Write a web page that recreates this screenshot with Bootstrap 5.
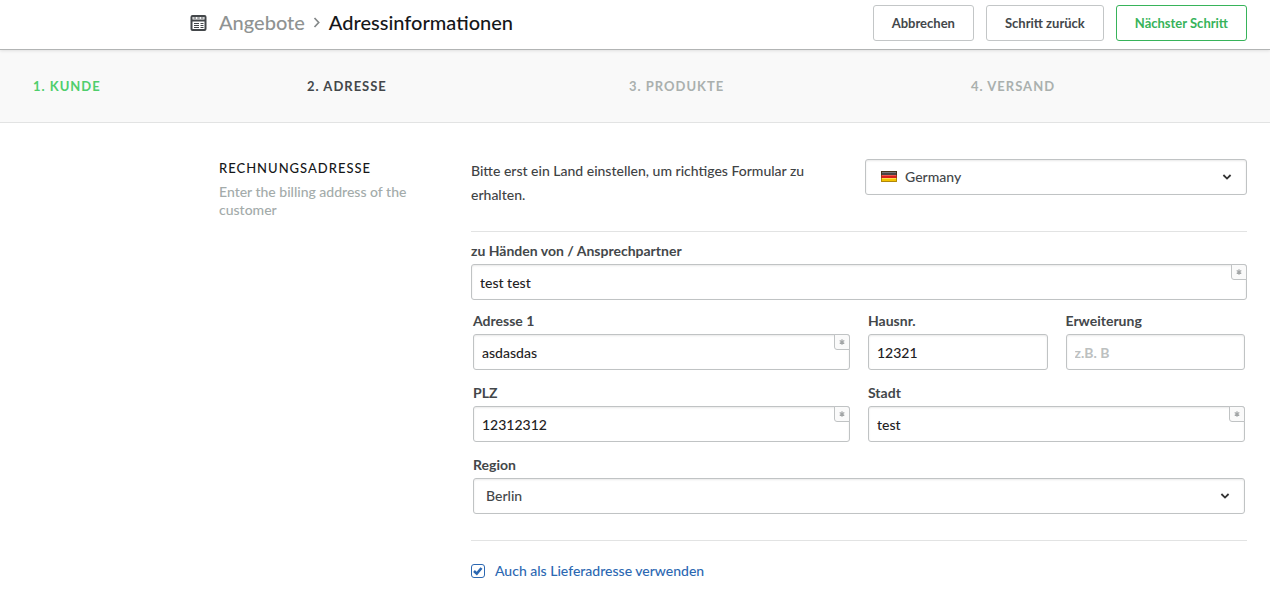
<!DOCTYPE html>
<html lang="de">
<head>
<meta charset="utf-8">
<meta name="viewport" content="width=device-width, initial-scale=1">
<title>Angebote – Adressinformationen</title>
<link href="https://cdn.jsdelivr.net/npm/bootstrap@5.3.0/dist/css/bootstrap.min.css" rel="stylesheet">
<style>
  body { font-family: Lato, "Liberation Sans", sans-serif; font-size: 14px; line-height: 24px; font-weight: 500; color: #3f4345; background: #fff; }
  .topbar { min-height: 50px; padding: 4px 23px 8px 190px; border-bottom: 1px solid #b2b4b4; box-shadow: 0 1px 3px rgba(0,0,0,.1); position: relative; }
  .crumbs { font-size: 20px; line-height: 28px; padding-bottom: 2px; }
  .crumbs a { color: #8f9392; text-decoration: none; }
  .crumbs .current-page { color: #151719; }
  .action-btn { --bs-btn-font-size: 13px; --bs-btn-line-height: 20px; --bs-btn-padding-y: 7px; --bs-btn-padding-x: 18px; --bs-btn-font-weight: 700; --bs-btn-border-radius: 3px; --bs-btn-color: #43474a; --bs-btn-border-color: #c3c6c7; --bs-btn-hover-border-color: #999; }
  .action-next { --bs-btn-color: #37b35a; --bs-btn-border-color: #37b35a; --bs-btn-hover-color: #37b35a; }
  .steps { display: grid; grid-template-columns: 274fr 322fr 342fr 299fr; padding: 24px 0 24px 33px; background: #f9f9f9; border-bottom: 1px solid #e2e3e3; font-size: 13px; font-weight: 700; letter-spacing: 1px; color: #aab0ae; }
  .steps a { color: #4fce6c; text-decoration: none; }
  .steps .active-step { color: #43474a; }
  .content { padding: 36px 23px 24px 219px; }
  .intro { width: 252px; padding-right: 52px; }
  .intro h2 { font-size: 13px; line-height: 18px; letter-spacing: 1px; font-weight: 500; color: #151719; margin-bottom: 6px; }
  .intro p { line-height: 18px; color: #a3abaa; }
  .country-row { padding-bottom: 24px; border-bottom: 1px solid #e2e3e3; }
  .country-field { padding-left: 6px; }
  .field-rows { padding: 0 2px; margin-top: 10px; row-gap: 12px; }
  .field-rows .row { --bs-gutter-x: 18px; }
  .form-label { display: block; font-weight: 700; color: #43474a; margin: 0 0 2px; line-height: 22px; }
  .form-control, .form-select { height: 36px; font-size: 14px; line-height: 20px; font-weight: 500; border-color: #c0c3c4; border-radius: 3px; box-shadow: inset 0 1px 2px rgba(0,0,0,.09); }
  .form-control { padding: 7px 8px; color: #1f2224; }
  .form-control::placeholder { color: #bcc0c0; font-weight: 700; }
  .form-select { padding: 7px 36px 7px 12px; color: #43474a; background-image: url("data:image/svg+xml,%3Csvg xmlns='http://www.w3.org/2000/svg' viewBox='0 0 10 8'%3E%3Cpath d='M1.4 2l3.6 3.6L8.600 2' fill='none' stroke='%23333' stroke-width='1.800'/%3E%3C/svg%3E"); background-size: 10px 8px; background-position: right 14px center; }
  .country-select { padding-left: 39px; }
  .flag { position: absolute; left: 16px; top: 12px; pointer-events: none; }
  .required-mark { position: absolute; top: 0; right: 0; width: 16px; height: 16px; border: 1px solid #c0c3c4; border-radius: 0 3px 0 3px; background: #fafafa; pointer-events: none; }
  .required-mark svg { display: block; margin: 4px; }
  .shipping { margin-top: 26px; padding-top: 18px; border-top: 1px solid #e2e3e3; color: #2c68b2; gap: 10px; }
  .shipping .form-check-input { width: 14px; height: 14px; margin: 0; border: 1px solid #2c68b2; border-radius: 3px; background-color: #fff; }
  .shipping .form-check-input:checked { background-size: 12px 12px; background-image: url("data:image/svg+xml,%3Csvg xmlns='http://www.w3.org/2000/svg' viewBox='0 0 12 12'%3E%3Cpath d='M2 6l2.800 2.600 4.700-5.600' fill='none' stroke='%232c68b2' stroke-width='2.600'/%3E%3C/svg%3E"); }
</style>
</head>
<body>
<svg class="d-none" aria-hidden="true">
  <symbol id="asterisk" viewBox="0 0 6 6"><path d="M3 .3v5.400M.7 1.600l4.600 2.800M5.300 1.600L.7 4.400" stroke="#a2a5a6" stroke-width="1.200" fill="none"/></symbol>
</svg>

<header class="topbar d-flex flex-wrap justify-content-between align-items-center gap-2">
  <nav class="crumbs d-flex align-items-center" aria-label="Breadcrumb">
    <svg class="mt-1" width="17" height="17" viewBox="0 0 17 17" aria-hidden="true">
      <rect x="1.500" y="1" width="14" height="14" rx="1" fill="#fff" stroke="#43474a" stroke-width="2"/>
      <path d="M1 5.500h15" stroke="#43474a" stroke-width="2"/>
      <path d="M3.500 3h10" stroke="#43474a" stroke-width="1.200" stroke-dasharray="2.600 1.100"/>
      <path d="M4 8.500h5M10.500 8.500h3M4 10.500h5M10.500 10.500h3M4 12.500h5M10.500 12.500h3" stroke="#43474a" stroke-width="1"/>
    </svg>
    <a href="#" class="ms-2 ps-1">Angebote</a>
    <svg class="mx-2" width="8" height="12" viewBox="0 0 8 12" aria-hidden="true"><path d="M1.500 2L5.700 6.500l-4.200 4.500" fill="none" stroke="#85898a" stroke-width="1.700"/></svg>
    <span class="current-page" aria-current="page">Adressinformationen</span>
  </nav>
  <div class="d-flex gap-2">
    <button type="button" class="btn action-btn me-1">Abbrechen</button>
    <button type="button" class="btn action-btn me-1">Schritt zurück</button>
    <button type="submit" form="address" class="btn action-btn action-next">Nächster Schritt</button>
  </div>
</header>

<nav class="steps" aria-label="Schritte">
  <a href="#">1. KUNDE</a>
  <span class="active-step" aria-current="step">2. ADRESSE</span>
  <span>3. PRODUKTE</span>
  <span>4. VERSAND</span>
</nav>

<main class="content d-flex">
  <section class="intro flex-shrink-0">
    <h2>RECHNUNGSADRESSE</h2>
    <p class="mb-0">Enter the billing address of the customer</p>
  </section>

  <form id="address" class="flex-grow-1">
    <div class="country-row d-flex">
      <label for="country" class="w-50 pe-5">Bitte erst ein Land einstellen, um richtiges Formular zu erhalten.</label>
      <div class="w-50 country-field">
        <div class="position-relative">
          <select id="country" class="form-select country-select"><option>Germany</option></select>
          <svg class="flag" width="16" height="11" viewBox="0 0 16 11" aria-hidden="true">
            <path d="M0 0h16v4H0z" fill="#222"/><path d="M0 4h16v3H0z" fill="#d8201c"/><path d="M0 7h16v4H0z" fill="#f5c400"/>
            <path d="M1 1h14v1H1z" fill="#777"/><path d="M1 2h14v2H1z" fill="#4a4444"/><path d="M1 4h14v1H1z" fill="#ee5a4c"/><path d="M1 7h14v1H1z" fill="#ffdf50"/>
            <path d="M.5.5h15v10H.5z" fill="none" stroke="#6c4a16" stroke-opacity=".5"/>
          </svg>
        </div>
      </div>
    </div>

    <div class="pt-2">
      <label class="form-label" for="contact">zu Händen von / Ansprechpartner</label>
      <div class="position-relative">
        <input id="contact" type="text" class="form-control" value="test test" required>
        <span class="required-mark"><svg width="6" height="6"><use href="#asterisk"/></svg></span>
      </div>
    </div>

    <div class="field-rows d-grid">
      <div class="row">
        <div class="col-6">
          <label class="form-label" for="street">Adresse 1</label>
          <div class="position-relative">
            <input id="street" type="text" class="form-control" value="asdasdas" required>
            <span class="required-mark"><svg width="6" height="6"><use href="#asterisk"/></svg></span>
          </div>
        </div>
        <div class="col-3">
          <label class="form-label" for="number">Hausnr.</label>
          <input id="number" type="text" class="form-control" value="12321">
        </div>
        <div class="col-3">
          <label class="form-label" for="extension">Erweiterung</label>
          <input id="extension" type="text" class="form-control" placeholder="z.B. B">
        </div>
      </div>
      <div class="row">
        <div class="col-6">
          <label class="form-label" for="zip">PLZ</label>
          <div class="position-relative">
            <input id="zip" type="text" class="form-control" value="12312312" required>
            <span class="required-mark"><svg width="6" height="6"><use href="#asterisk"/></svg></span>
          </div>
        </div>
        <div class="col-6">
          <label class="form-label" for="city">Stadt</label>
          <div class="position-relative">
            <input id="city" type="text" class="form-control" value="test" required>
            <span class="required-mark"><svg width="6" height="6"><use href="#asterisk"/></svg></span>
          </div>
        </div>
      </div>
      <div>
        <label class="form-label" for="region">Region</label>
        <select id="region" class="form-select"><option>Berlin</option></select>
      </div>
    </div>

    <div class="shipping d-flex align-items-center">
      <input id="shipping" type="checkbox" class="form-check-input" checked>
      <label for="shipping">Auch als Lieferadresse verwenden</label>
    </div>
  </form>
</main>
<script src="https://cdn.jsdelivr.net/npm/bootstrap@5.3.0/dist/js/bootstrap.bundle.min.js"></script>
</body>
</html>
